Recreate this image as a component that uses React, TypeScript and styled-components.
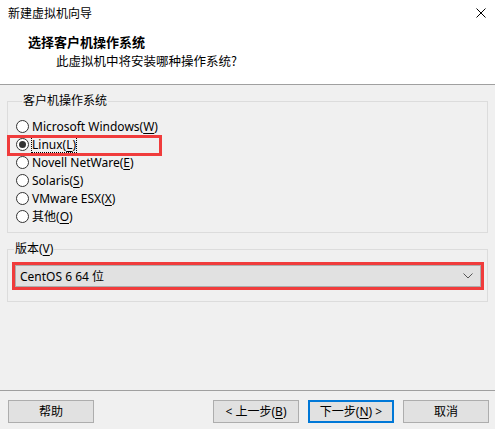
import React from 'react';
import styled, { createGlobalStyle } from 'styled-components';

const GlobalStyle = createGlobalStyle`
    html, body {
        margin: 0;
        padding: 0;
        background: #f0f0f0;
    }
    body {
        font-family: "Segoe UI", "Noto Sans", "Noto Sans CJK SC", sans-serif;
        font-size: 12px;
        color: #000;
    }
`;

const Styled = {
    Window: styled.div`
        width: 495px;
        height: 429px;
        display: flex;
        flex-direction: column;
        background: #f0f0f0;
        overflow: hidden;
    `,
    Header: styled.div`
        height: 84px;
        background: #fff;
        border-bottom: 1px solid #a0a0a0;
        display: flex;
        flex-direction: column;
    `,
    TitleBar: styled.div`
        height: 26px;
        display: flex;
        align-items: center;
        justify-content: space-between;
        padding: 0 8px 0 8px;
    `,
    Title: styled.span`
        font-family: "Noto Sans CJK SC", sans-serif;
        font-size: 12px;
        line-height: 26px;
    `,
    CloseButton: styled.div`
        width: 10px;
        height: 10px;
        display: flex;
        margin-right: 1px;
    `,
    Heading: styled.div`
        margin: 7px 0 0 28px;
        font-family: "Noto Sans CJK SC", sans-serif;
        font-weight: bold;
        font-size: 13px;
        line-height: 18px;
    `,
    Subtitle: styled.div`
        margin: 1px 0 0 56px;
        font-family: "Noto Sans CJK SC", sans-serif;
        font-size: 12.5px;
        line-height: 18px;
    `,
    Body: styled.div`
        flex: 1;
        display: flex;
        flex-direction: column;
        padding: 0 7px;
    `,
    Group: styled.fieldset<{ $top: number; $pad: string }>`
        margin: ${(p) => p.$top}px 0 0 0;
        padding: ${(p) => p.$pad};
        border: 1px solid #dcdcdc;
        min-width: 0;
    `,
    Legend: styled.legend`
        padding: 0 1px;
        margin-left: 6px;
        line-height: 14px;
        font-size: 12px;
    `,
    RadioRow: styled.label`
        position: relative;
        height: 18px;
        display: flex;
        align-items: center;
        gap: 3px;
    `,
    Radio: styled.span<{ $checked?: boolean }>`
        width: 13px;
        height: 13px;
        box-sizing: border-box;
        border: 1px solid #333;
        border-radius: 50%;
        background: #fff;
        display: flex;
        align-items: center;
        justify-content: center;

        &::after {
            content: '';
            width: 7px;
            height: 7px;
            border-radius: 50%;
            background: ${(p) => (p.$checked ? '#333' : 'transparent')};
        }
    `,
    RadioText: styled.span<{ $focused?: boolean }>`
        line-height: 15px;
        outline: ${(p) => (p.$focused ? '1px dotted #000' : 'none')};
        outline-offset: 0;
    `,
    Mnemonic: styled.span`
        text-decoration: underline;
        text-underline-offset: 2px;
    `,
    Highlight: styled.div`
        position: absolute;
        left: -9px;
        top: 0;
        width: 155px;
        height: 21px;
        box-sizing: border-box;
        border: 3px solid #f03c3c;
        pointer-events: none;
    `,
    ComboFrame: styled.div`
        margin: 0 3px 0 4px;
        border: 3px solid #f03c3c;
    `,
    Combo: styled.div`
        height: 20px;
        border: 1px solid #adadad;
        background: #e1e1e1;
        display: flex;
        align-items: center;
        justify-content: space-between;
        padding: 0 7px 0 4px;
    `,
    ComboText: styled.span`
        font-size: 12px;
    `,
    Spacer: styled.div`
        flex: 1;
    `,
    Footer: styled.div`
        border-top: 1px solid #a0a0a0;
        height: 39px;
        display: flex;
        align-items: flex-start;
        padding: 9px 6px 0 8px;
        box-sizing: border-box;
        gap: 9px;
    `,
    Button: styled.button<{ $primary?: boolean; $push?: boolean }>`
        width: 86px;
        height: 23px;
        box-sizing: border-box;
        margin: 0 0 0 ${(p) => (p.$push ? 'auto' : '0')};
        padding: 0;
        background: #e1e1e1;
        border: ${(p) => (p.$primary ? '2px solid #0078d7' : '1px solid #adadad')};
        font-family: "Segoe UI", "Noto Sans", "Noto Sans CJK SC", sans-serif;
        font-size: 12px;
        color: #000;
        line-height: 19px;
    `,
};

const systems = [
    { name: 'Microsoft Windows', key: 'W' },
    { name: 'Linux', key: 'L', checked: true },
    { name: 'Novell NetWare', key: 'E' },
    { name: 'Solaris', key: 'S' },
    { name: 'VMware ESX', key: 'X' },
    { name: '其他', key: 'O' },
];

const App: React.FC = () => {
    return (
        <>
            <GlobalStyle />
            <Styled.Window>
                <Styled.Header>
                    <Styled.TitleBar>
                        <Styled.Title>新建虚拟机向导</Styled.Title>
                        <Styled.CloseButton>
                            <svg width="10" height="10" viewBox="0 0 10 10">
                                <path d="M0.5 0.5 L9.5 9.5 M9.5 0.5 L0.5 9.5" stroke="#000" strokeWidth="1" />
                            </svg>
                        </Styled.CloseButton>
                    </Styled.TitleBar>
                    <Styled.Heading>选择客户机操作系统</Styled.Heading>
                    <Styled.Subtitle>此虚拟机中将安装哪种操作系统?</Styled.Subtitle>
                </Styled.Header>

                <Styled.Body>
                    <Styled.Group $top={9} $pad="9px 8px 7px 8px">
                        <Styled.Legend>客户机操作系统</Styled.Legend>
                        {systems.map((s) => (
                            <Styled.RadioRow key={s.key}>
                                <Styled.Radio $checked={s.checked} />
                                <Styled.RadioText $focused={s.checked}>
                                    {s.name}(<Styled.Mnemonic>{s.key}</Styled.Mnemonic>)
                                </Styled.RadioText>
                                {s.checked && <Styled.Highlight />}
                            </Styled.RadioRow>
                        ))}
                    </Styled.Group>

                    <Styled.Group $top={9} $pad="6px 0 11px 0">
                        <Styled.Legend>
                            版本(<Styled.Mnemonic>V</Styled.Mnemonic>)
                        </Styled.Legend>
                        <Styled.ComboFrame>
                            <Styled.Combo>
                                <Styled.ComboText>CentOS 6 64 位</Styled.ComboText>
                                <svg width="10" height="6" viewBox="0 0 10 6">
                                    <path d="M0.5 0.5 L5 5 L9.5 0.5" stroke="#555" strokeWidth="1" fill="none" />
                                </svg>
                            </Styled.Combo>
                        </Styled.ComboFrame>
                    </Styled.Group>
                    <Styled.Spacer />
                </Styled.Body>

                <Styled.Footer>
                    <Styled.Button>帮助</Styled.Button>
                    <Styled.Button $push>
                        &lt; 上一步(<Styled.Mnemonic>B</Styled.Mnemonic>)
                    </Styled.Button>
                    <Styled.Button $primary>
                        下一步(<Styled.Mnemonic>N</Styled.Mnemonic>) &gt;
                    </Styled.Button>
                    <Styled.Button>取消</Styled.Button>
                </Styled.Footer>
            </Styled.Window>
        </>
    );
};

export default App;
